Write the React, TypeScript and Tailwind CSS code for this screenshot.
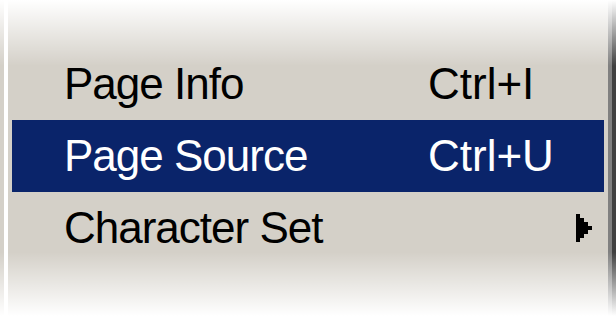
type Item = { label: string; shortcut?: string; submenu?: boolean; active?: boolean };

const items: Item[] = [
  { label: "Page Info", shortcut: "Ctrl+I" },
  { label: "Page Source", shortcut: "Ctrl+U", active: true },
  { label: "Character Set", submenu: true },
];

function SubArrow() {
  return (
    <svg width="16" height="28" viewBox="0 0 4 7" shapeRendering="crispEdges" className="fill-current">
      <path d="M0 0h1v7H0zM1 1h1v5H1zM2 2h1v3H2zM3 3h1v1H3z" />
    </svg>
  );
}

export default function App() {
  return (
    <div className="relative h-[316px] w-[616px] overflow-hidden bg-[#d4d0c8] font-['Liberation_Sans',Arial,sans-serif]">
      <div className="flex h-full">
        <div className="w-1 bg-[#d4d0c8]" />
        <div className="w-1 bg-white" />
        <div className="flex-1 px-1 pt-12">
          {items.map((item) => (
            <div
              key={item.label}
              className={`flex h-[72px] items-center pl-[52px] pr-3 text-[44px] leading-none ${
                item.active ? "bg-[#0a246a] text-white" : "text-black"
              }`}
            >
              <span className="w-[364px] whitespace-nowrap tracking-[-1px]">{item.label}</span>
              <span className="flex-1 whitespace-nowrap">{item.shortcut}</span>
              {item.submenu && <SubArrow />}
            </div>
          ))}
        </div>
        <div className="w-1 bg-[#808080]" />
        <div className="w-1 bg-[#404040]" />
      </div>
      <div className="pointer-events-none absolute inset-x-0 top-0 h-[66px] bg-linear-to-b from-white to-white/0" />
      <div className="pointer-events-none absolute inset-x-0 bottom-0 h-[64px] bg-linear-to-t from-white to-white/0" />
    </div>
  );
}
